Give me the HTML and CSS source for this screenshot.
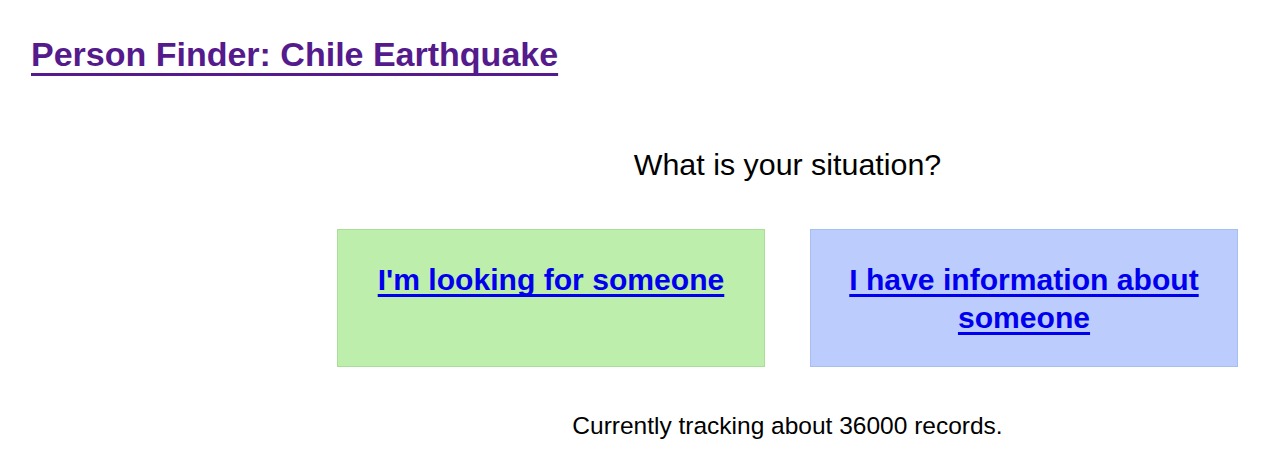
FILE: index.html
```html
<!DOCTYPE html>
<html lang="en">
<head>
<meta charset="utf-8">
<title>Person Finder: Chile Earthquake</title>
<link rel="stylesheet" href="styles.css">
</head>
<body>
<header class="header">
  <a class="title" href="#">Person Finder: Chile Earthquake</a>
</header>
<main class="main">
  <p class="question">What is your situation?</p>
  <div class="choices">
    <div class="choice choice-seek"><a class="choice-link" href="#">I'm looking for someone</a></div>
    <div class="choice choice-provide"><a class="choice-link" href="#">I have information about someone</a></div>
  </div>
  <p class="tracking">Currently tracking about 36000 records.</p>
</main>
</body>
</html>
```
FILE: styles.css
```css
html, body {
  margin: 0;
  padding: 0;
  background: #ffffff;
}
body {
  font-family: "Liberation Sans", Arial, sans-serif;
  color: #000;
}
.header {
  padding: 34px 0 0 31px;
}
.title {
  font-size: 34px;
  line-height: 40px;
  font-weight: bold;
  color: #551a8b;
  text-decoration: underline;
  text-decoration-thickness: 3px;
  text-underline-offset: 7px;
  text-decoration-skip-ink: none;
}
.main {
  margin-left: 337px;
  width: 901px;
  display: flex;
  flex-direction: column;
  align-items: center;
}
.question {
  margin: 72px 0 0;
  font-size: 30.4px;
  line-height: 36px;
}
.choices {
  margin-top: 47px;
  display: flex;
  gap: 45px;
}
.choice {
  box-sizing: border-box;
  width: 428px;
  height: 138px;
  padding: 31px 30px 0;
  text-align: center;
  font-size: 30.1px;
  line-height: 38px;
  font-weight: bold;
}
.choice-seek {
  background: #bdeeab;
  border: 1px solid #a9dd98;
}
.choice-provide {
  background: #bccdfd;
  border: 1px solid #a8bdf0;
}
.choice-link {
  color: #0000ee;
  text-decoration: underline;
  text-decoration-thickness: 3px;
  text-underline-offset: 4px;
  text-decoration-skip-ink: none;
}
.tracking {
  margin: 45px 0 0;
  font-size: 24.5px;
  line-height: 28px;
}
```
